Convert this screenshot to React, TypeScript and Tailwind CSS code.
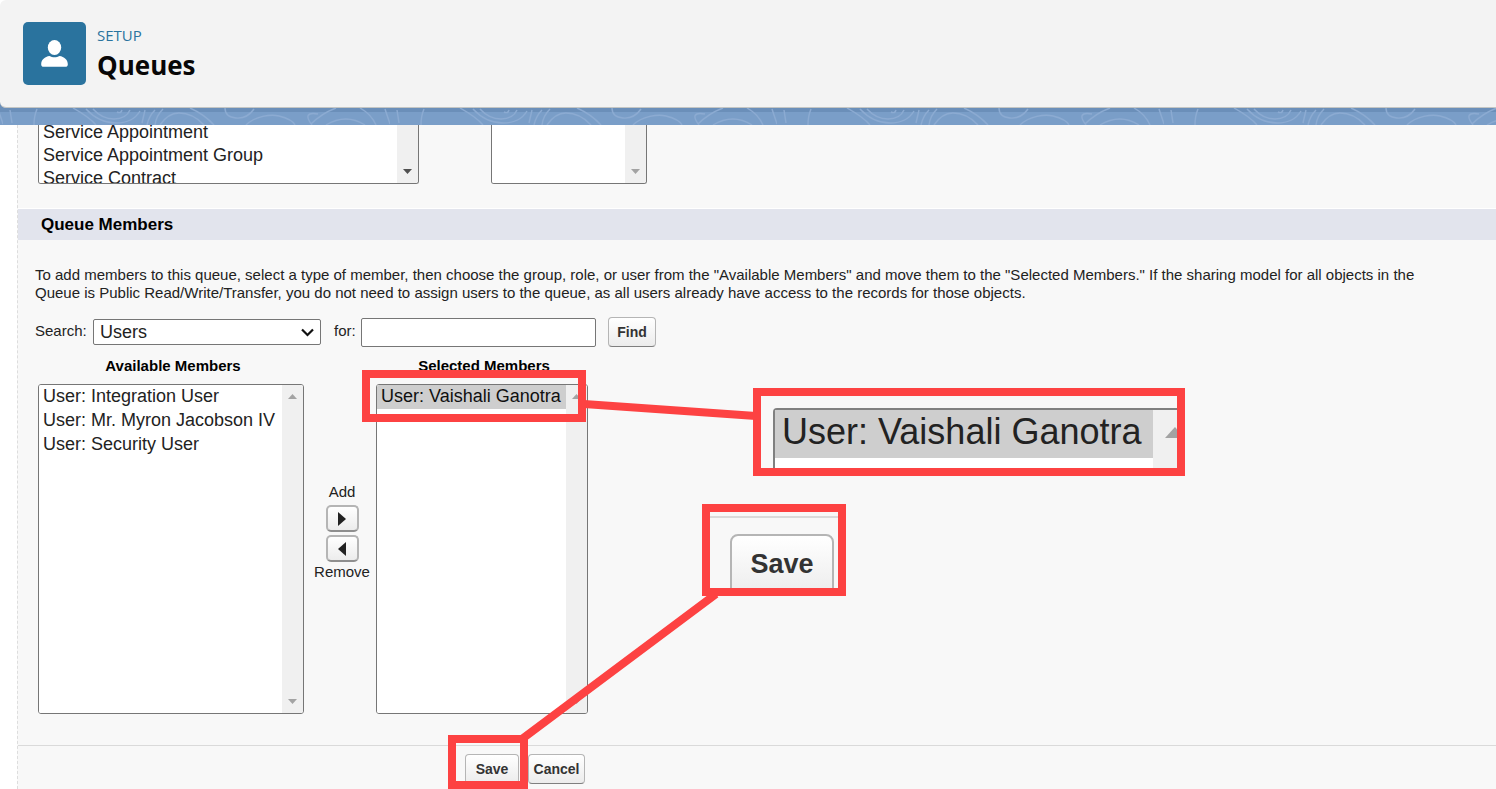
import React from 'react';

const availableMembers = [
  'User: Integration User',
  'User: Mr. Myron Jacobson IV',
  'User: Security User',
];

const toolButton =
  'rounded border border-[#b5b5b5] border-b-[#7f7f7f] bg-gradient-to-b from-white to-[#ececec] text-sm font-bold text-[#333]';

const moveButton =
  'flex h-[27px] w-[33px] items-center justify-center rounded-[5px] border-2 border-[#b5b5b5] border-b-[#8f8f8f] bg-gradient-to-b from-white to-[#ececec]';

const listSelect =
  'block min-w-0 flex-1 overflow-hidden bg-white p-0 text-[18px] text-[#222] outline-none [scrollbar-width:none]';

const ArrowUp = ({ className }: { className: string }) => (
  <svg className={className} width="9" height="5" viewBox="0 0 9 5" fill="currentColor">
    <path d="M4.5 0L9 5H0z" />
  </svg>
);

const ArrowDown = ({ className }: { className: string }) => (
  <svg className={className} width="9" height="5" viewBox="0 0 9 5" fill="currentColor">
    <path d="M0 0h9L4.5 5z" />
  </svg>
);

const ScrollTrack = () => (
  <div className="flex w-[21px] shrink-0 flex-col items-center justify-between bg-[#f0f0f0] py-[9px]">
    <ArrowUp className="text-[#a3a3a3]" />
    <ArrowDown className="text-[#a3a3a3]" />
  </div>
);

const TopoBand = () => (
  <svg className="block h-[23px] w-full" aria-hidden="true">
    <defs>
      <pattern id="topo" width="387" height="23" patternUnits="userSpaceOnUse" patternTransform="translate(3 6)">
        <g fill="none" stroke="#8cabd2" strokeWidth="1.4">
          <path d="M34 1Q31 8 31 17" />
          <path d="M70 0C79 5 87 10 93 17" />
          <path d="M83 1Q96 15 113 15T137 3" />
          <path d="M90 1Q99 11 111 11T127 2" />
          <path d="M114 4Q118 6 119 2" />
          <path d="M142 2L139 15M152 2Q146 8 144 17M160 1Q153 8 152 17" />
          <path d="M157 17Q165 5 176 5Q190 5 201 17" />
          <path d="M187 0Q201 6 211 17" />
          <path d="M222 0Q222 9 233 10T251 1" />
          <path d="M243 17C252 8 268 6 276 8S290 13 292 17" />
          <path d="M309 17C302 8 304 4 315 6M308 16C316 8 322 4 333 0" />
          <path d="M323 17Q343 5 362 17" />
          <path d="M357 0Q368 6 373 17" />
          <path d="M382 1L387 16M7 2L9 15" />
        </g>
      </pattern>
    </defs>
    <rect width="100%" height="23" fill="#7a9ec8" />
    <rect width="100%" height="10" fill="#6b8fb9" />
    <rect width="100%" height="23" fill="url(#topo)" />
  </svg>
);

const App = () => {
  return (
    <div className="relative flex min-h-screen flex-col overflow-hidden bg-white font-['Liberation_Sans',Arial,sans-serif] text-[15px] leading-[18px] text-[#222]">
      {/* Page header */}
      <header className="z-10 flex h-[108px] items-center gap-[11px] rounded-l-md border-b border-[#c4c6c4] bg-[#f3f3f3] pl-[23px]">
        <div className="flex size-[63px] items-center justify-center rounded-[5px] bg-[#2a739e]">
          <svg width="27" height="28" viewBox="0 0 27 28" fill="#fff">
            <ellipse cx="13.5" cy="7.5" rx="6.7" ry="7.5" />
            <path d="M8.500 15.900c3 1.900 7 1.900 10 0 4.600.6 8.300 3.900 8.300 8v.6c0 1.600-1 2.300-2.400 2.300H2.600C1.200 26.800.2 26.100.2 24.500v-.6c0-4.100 3.700-7.400 8.300-8z" />
          </svg>
        </div>
        <div className="pt-[3px] font-['Open_Sans','Noto_Sans',sans-serif]">
          <p className="text-[15px] leading-5 text-[#2a739e]">SETUP</p>
          <h1 className="text-[26px] leading-10 font-bold text-[#080707]">Queues</h1>
        </div>
      </header>
      <div className="-mt-[6px]">
        <TopoBand />
      </div>

      <main className="ml-[17px] flex-1 border-l border-dashed border-[#ddd] bg-[#f8f8f8]">
        {/* Supported objects */}
        <section className="flex h-[84px] items-start gap-[72px] border-b border-white pl-5">
          <div className="flex h-[59px] w-[381px] overflow-hidden rounded-b-[3px] border border-t-0 border-[#767676] bg-white">
            <select multiple aria-label="Available Objects" className={`${listSelect} -mt-[3px] h-[62px]`}>
              <option className="h-[23px] px-1 py-0 leading-[23px]">Service Appointment</option>
              <option className="h-[23px] px-1 py-0 leading-[23px]">Service Appointment Group</option>
              <option className="h-[23px] px-1 py-0 leading-[23px]">Service Contract</option>
            </select>
            <div className="flex w-[21px] items-end justify-center bg-[#f0f0f0] pb-[9px]">
              <ArrowDown className="text-[#505050]" />
            </div>
          </div>
          <div className="flex h-[59px] w-[156px] overflow-hidden rounded-b-[3px] border border-t-0 border-[#767676] bg-white">
            <select multiple aria-label="Selected Objects" className={`${listSelect} h-full`} />
            <div className="flex w-[21px] items-end justify-center bg-[#f0f0f0] pb-[9px]">
              <ArrowDown className="text-[#a3a3a3]" />
            </div>
          </div>
        </section>

        {/* Queue members */}
        <h2 className="bg-[#e2e4ed] pl-[23px] text-[17px] leading-[31px] font-bold text-black">Queue Members</h2>
        <section className="pt-[26px] pl-[17px]">
          <p className="pr-10">
            To add members to this queue, select a type of member, then choose the group, role, or user from the "Available Members" and move them to the "Selected Members." If the sharing model for all objects in the Queue is Public Read/Write/Transfer, you do not need to assign users to the queue, as all users already have access to the records for those objects.
          </p>

          <div className="mt-[15px] flex h-[30px] items-center">
            <label htmlFor="member_type" className="w-[58px] pb-[2px]">Search:</label>
            <div className="relative">
              <select id="member_type" className="block h-[26px] w-[228px] appearance-none rounded-[2px] border border-[#767676] bg-white pl-[6px] text-[18px] leading-6">
                <option>Users</option>
              </select>
              <svg className="pointer-events-none absolute top-[9px] right-[7px]" width="13" height="9" viewBox="0 0 13 9" fill="none" stroke="#111" strokeWidth="2.2">
                <path d="M1 1.500l5.500 5.500L12 1.500" />
              </svg>
            </div>
            <label htmlFor="member_search" className="ml-[13px] w-[27px] pb-[2px]">for:</label>
            <input id="member_search" type="text" className="h-[29px] w-[235px] rounded-[2px] border border-[#767676] bg-white px-1 text-[18px]" />
            <button className={`${toolButton} ml-3 h-[30px] w-12`}>Find</button>
          </div>

          <div className="flex pt-[10px] pl-[3px]">
            <div className="w-[266px]">
              <label htmlFor="available" className="mb-[9px] block pl-1 text-center font-bold text-black">Available Members</label>
              <div className="flex h-[330px] overflow-hidden rounded-[3px] border border-[#767676] bg-white">
                <select id="available" multiple className={listSelect}>
                  {availableMembers.map((name) => (
                    <option key={name} className="h-6 px-1 pt-px pb-0 leading-6">{name}</option>
                  ))}
                </select>
                <ScrollTrack />
              </div>
            </div>

            <div className="flex w-[72px] flex-col items-center pt-[126px] pl-1">
              <span>Add</span>
              <button aria-label="Add" className={`${moveButton} mt-1 mb-[3px]`}>
                <svg width="8" height="14" viewBox="0 0 8 14" fill="#222"><path d="M0 0l8 7-8 7z" /></svg>
              </button>
              <button aria-label="Remove" className={moveButton}>
                <svg width="8" height="14" viewBox="0 0 8 14" fill="#222"><path d="M8 0L0 7l8 7z" /></svg>
              </button>
              <span className="mt-px">Remove</span>
            </div>

            <div className="w-[212px]">
              <label htmlFor="selected" className="mb-[9px] block pl-1 text-center font-bold text-black">Selected Members</label>
              <div className="flex h-[330px] overflow-hidden rounded-[3px] border border-[#767676] bg-white">
                <select id="selected" multiple defaultValue={['vg']} className={listSelect}>
                  <option value="vg" className="h-6 px-1 pt-px pb-0 leading-6">User: Vaishali Ganotra</option>
                </select>
                <ScrollTrack />
              </div>
            </div>
          </div>
        </section>

        <div className="mt-[31px] flex gap-[9px] border-t border-[#dadada] pt-2 pl-[447px]">
          <button className={`${toolButton} h-[30px] w-[54px]`}>Save</button>
          <button className={`${toolButton} h-[30px] w-[57px]`}>Cancel</button>
        </div>
      </main>

      {/* Highlights and callouts */}
      <div className="pointer-events-none absolute inset-0 z-20">
        <svg className="absolute inset-0 size-full" stroke="#fd4242" strokeWidth="8">
          <path d="M584 404L756 416M522 739L716 594" />
        </svg>
        <div className="absolute top-[370px] left-[362px] h-[52px] w-[224px] border-8 border-[#fd4242]" />
        <div className="absolute top-[735px] left-[448px] h-[54px] w-[80px] border-8 border-[#fd4242]" />

        <div className="absolute top-[388px] left-[753px] h-[88px] w-[432px] overflow-hidden border-8 border-[#fd4242] bg-[#f8f8f8] pt-3 pl-3">
          <div className="flex h-full rounded-tl-[4px] border-t-2 border-l-2 border-[#808080] bg-white">
            <p className="h-12 w-[378px] bg-[#cecece] pl-[7px] text-[36px] leading-[44px]">User: Vaishali Ganotra</p>
            <div className="flex-1 overflow-hidden bg-[#f0f0f0] pt-[17px] pl-3">
              <svg width="20" height="11" viewBox="0 0 20 11" fill="#a3a3a3"><path d="M10 0l10 11H0z" /></svg>
            </div>
          </div>
        </div>

        <div className="absolute top-[504px] left-[702px] h-[92px] w-[144px] overflow-hidden border-8 border-[#fd4242] bg-[#f8f8f8] pt-1">
          <div className="h-full border-t-2 border-[#dadada] pt-4 pl-5">
            <div className="h-16 w-[104px] rounded-t-lg border-2 border-[#b5b5b5] bg-gradient-to-b from-white to-[#ececec] text-center text-[27px] leading-[56px] font-bold text-[#333]">
              Save
            </div>
          </div>
        </div>
      </div>
    </div>
  );
};

export default App;
